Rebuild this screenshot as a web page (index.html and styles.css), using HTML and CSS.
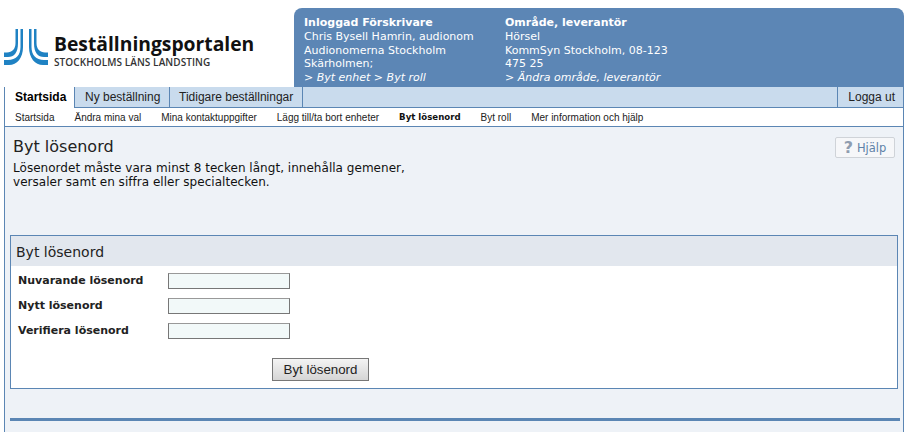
FILE: index.html
```html
<!DOCTYPE html>
<html lang="sv">
<head>
<meta charset="utf-8">
<title>Byt lösenord</title>
<link rel="stylesheet" href="styles.css">
</head>
<body>
<div class="page">
  <header class="top">
    <div class="logo">
      <svg class="logo-mark" width="44" height="37" viewBox="0 0 44 37" fill="#1f82c3">
        <g>
          <path d="M11.5 0H14V14C14 24 10 28 4 28H0V23.5H3C8 23.5 11.5 20 11.5 14Z"/>
          <path d="M16.5 0H19V18C19 29 13 36 5 36H0V31H4C12 31 16.5 26 16.5 18Z"/>
        </g>
        <g transform="translate(44 0) scale(-1 1)">
          <path d="M11.5 0H14V14C14 24 10 28 4 28H0V23.5H3C8 23.5 11.5 20 11.5 14Z"/>
          <path d="M16.5 0H19V18C19 29 13 36 5 36H0V31H4C12 31 16.5 26 16.5 18Z"/>
        </g>
      </svg>
      <div class="logo-text">
        <div class="logo-title">Beställningsportalen</div>
        <div class="logo-sub">STOCKHOLMS LÄNS LANDSTING</div>
      </div>
    </div>
    <div class="user-panel">
      <div class="user-col user-col-a">
        <strong>Inloggad Förskrivare</strong>
        <span>Chris Bysell Hamrin, audionom</span>
        <span>Audionomerna Stockholm</span>
        <span>Skärholmen;</span>
        <em>&gt; Byt enhet &gt; Byt roll</em>
      </div>
      <div class="user-col">
        <strong>Område, leverantör</strong>
        <span>Hörsel</span>
        <span>KommSyn Stockholm, 08-123</span>
        <span>475 25</span>
        <em>&gt; Ändra område, leverantör</em>
      </div>
    </div>
  </header>

  <nav class="tabs">
    <a class="tab tab-active">Startsida</a>
    <a class="tab tab-new">Ny beställning</a>
    <a class="tab tab-old">Tidigare beställningar</a>
    <a class="tab tab-logout">Logga ut</a>
  </nav>

  <nav class="subnav">
    <a>Startsida</a>
    <a>Ändra mina val</a>
    <a>Mina kontaktuppgifter</a>
    <a>Lägg till/ta bort enheter</a>
    <a class="sub-active">Byt lösenord</a>
    <a>Byt roll</a>
    <a>Mer information och hjälp</a>
  </nav>

  <main class="content">
    <div class="intro">
      <div class="intro-text">
        <h1>Byt lösenord</h1>
        <p>Lösenordet måste vara minst 8 tecken långt, innehålla gemener,<br>versaler samt en siffra eller specialtecken.</p>
      </div>
      <a class="help"><span class="help-q">?</span>Hjälp</a>
    </div>

    <section class="card">
      <h2>Byt lösenord</h2>
      <form class="card-body">
        <div class="row"><label>Nuvarande lösenord</label><input type="password"></div>
        <div class="row"><label>Nytt lösenord</label><input type="password"></div>
        <div class="row"><label>Verifiera lösenord</label><input type="password"></div>
        <button type="button">Byt lösenord</button>
      </form>
    </section>

    <div class="rule"></div>
  </main>
</div>
</body>
</html>
```
FILE: styles.css
```css
html, body { margin: 0; padding: 0; background: #fff; height: 432px; overflow: hidden; }
.page { margin: 0 4px; width: 900px; font-family: "DejaVu Sans", Verdana, sans-serif; color: #111; }
.top { display: flex; height: 87px; padding-top: 8px; box-sizing: border-box; }
.logo { width: 290px; display: flex; align-items: flex-start; padding-top: 21px; box-sizing: border-box; }
.logo-mark { flex: none; }
.logo-text { margin-left: 6px; margin-top: 3px; }
.logo-title { font: 700 19.3px/24px "Open Sans", sans-serif; color: #111; }
.logo-sub { margin-top: 1px; font: 600 10px/11px "Open Sans", sans-serif; color: #333; letter-spacing: 0.08px; }
.user-panel { flex: 1; display: flex; background: #5c86b5; border-radius: 8px 8px 0 0; color: #fff; font-size: 11px; line-height: 13.8px; padding: 8px 0 0 10px; overflow: hidden; }
.user-col { display: flex; flex-direction: column; white-space: nowrap; }
.user-col-a { width: 201px; }
.user-col em { font-style: italic; }
.tabs { display: flex; height: 21px; box-sizing: border-box; background: #c9dbed; border-bottom: 1px solid #5b86b4; border-left: 1px solid #5b86b4; border-right: 1px solid #5b86b4; font: 12px/20px "Liberation Sans", Arial, sans-serif; }
.tab { color: #222; border-right: 1px solid #5b86b4; }
.tab-active { background: #fff; color: #000; font-weight: 700; height: 21px; width: 70px; box-sizing: border-box; padding-left: 10px; }
.tab-new { width: 95px; box-sizing: border-box; padding-left: 10px; }
.tab-old { width: 133px; box-sizing: border-box; padding-left: 9px; }
.tab-logout { margin-left: auto; border-right: 0; border-left: 1px solid #5b86b4; padding: 0 8px 0 10px; }
.subnav { display: flex; gap: 20px; height: 19px; box-sizing: border-box; background: #fff; border: 1px solid #5b86b4; border-width: 0 1px 1px; padding-left: 10px; font: 10px/19px "Liberation Sans", Arial, sans-serif; color: #222; white-space: nowrap; }
.sub-active { font: 700 8.6px/19px "DejaVu Sans", Verdana, sans-serif; color: #111; }
.content { background: #eef2f7; border: 1px solid #5b86b4; border-width: 0 1px; height: 305px; padding: 0 5px; box-sizing: border-box; }
.intro { display: flex; justify-content: space-between; height: 108px; padding: 10px 3px 0 3px; box-sizing: border-box; }
.intro h1 { margin: 0; font-size: 16px; line-height: 20px; font-weight: 400; color: #222; }
.intro p { margin: 4px 0 0; font-size: 12px; line-height: 14px; color: #111; letter-spacing: 0.03px; }
.help { display: flex; align-items: center; justify-content: center; gap: 4px; width: 60px; height: 21px; box-sizing: border-box; border: 1px solid #cfd3d8; border-radius: 2px; background: #f6f7f9; color: #5f82a8; font-size: 11.5px; }
.help-q { font-weight: 700; font-size: 16px; line-height: 18px; color: #8f9db0; }
.card { background: #fff; border: 1px solid #5b86b4; height: 154px; box-sizing: border-box; }
.card h2 { margin: 0; height: 30px; background: #e2e7ee; font-size: 14px; line-height: 32px; font-weight: 400; padding-left: 5px; color: #222; }
.card-body { padding: 5px 0 0 7px; }
.row { display: flex; align-items: flex-start; height: 25px; }
.row label { width: 150px; font-size: 11px; line-height: 20px; font-weight: 700; color: #222; }
.row input { width: 122px; height: 16px; margin: 2px 0 0; padding: 0; box-sizing: border-box; background: #f2f9f9; border: 1px solid #777; border-top-color: #999; outline: 0; }
button { display: block; margin: 12px 0 0 254px; width: 97px; height: 23px; padding: 0; box-sizing: border-box; border: 1px solid #777; background: linear-gradient(#f4f4f4, #d5d5d5); font: 13.3px "Liberation Sans", Arial, sans-serif; color: #222; }
.rule { height: 3px; background: #5b86b4; margin: 29px -2px 0 0; }
```
